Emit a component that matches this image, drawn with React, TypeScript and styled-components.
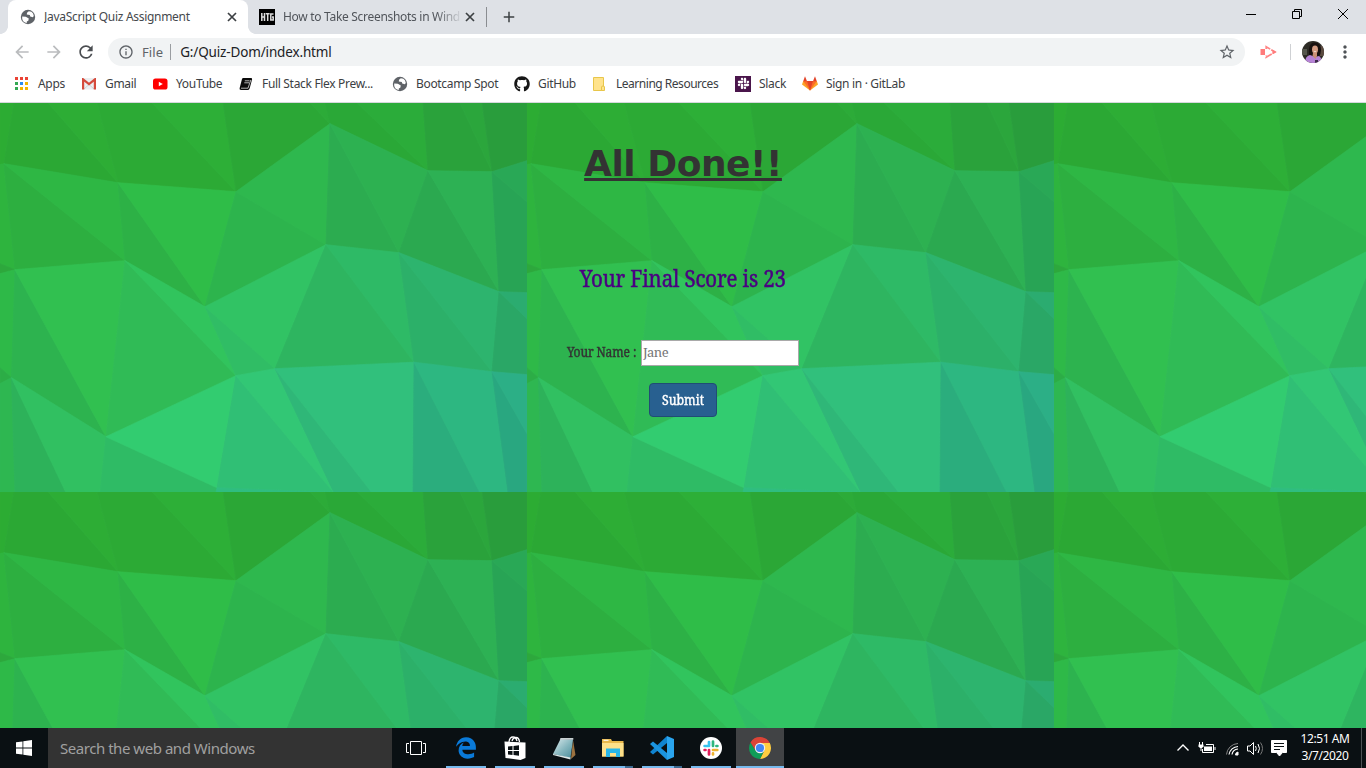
import React from 'react';
import styled, { createGlobalStyle } from 'styled-components';
import {
  MdArrowBack, MdArrowForward, MdRefresh, MdInfoOutline, MdStarBorder, MdMoreVert, MdAdd,
} from 'react-icons/md';
import { FaGithub, FaSlack, FaEdgeLegacy } from 'react-icons/fa';

const Global = createGlobalStyle`
  * { box-sizing: border-box; }
  html, body { margin: 0; padding: 0; overflow: hidden; }
  svg { display: block; flex: none; }
`;

const ui = `"Noto Sans", "Open Sans", sans-serif`;

const Screen = styled.div`
  width: 1366px;
  height: 768px;
  display: flex;
  flex-direction: column;
  overflow: hidden;
  background: #fff;
  font-family: ${ui};
  font-size: 12px;
  color: #3c4043;
`;

/* ---------- browser chrome ---------- */
const TabStrip = styled.div`
  height: 34px;
  background: #dee1e6;
  display: flex;
  align-items: stretch;
`;
const TabCorner = styled.div<{ $side: 'left' | 'right' }>`
  width: 8px;
  background: radial-gradient(circle at ${p => (p.$side === 'left' ? '0 26px' : '8px 26px')}, #dee1e6 7.6px, #fff 8.2px);
  clip-path: inset(26px 0 0 0);
`;
const Tab = styled.div<{ $active?: boolean }>`
  width: ${p => (p.$active ? 240 : 230)}px;
  padding: 0 9px 0 ${p => (p.$active ? 12 : 3)}px;
  background: ${p => (p.$active ? '#fff' : 'transparent')};
  border-radius: 8px 8px 0 0;
  display: flex;
  align-items: center;
`;
const TabTitle = styled.span<{ $fade?: boolean; $ls: number }>`
  flex: 1;
  margin-left: 8px;
  overflow: hidden;
  white-space: nowrap;
  font-size: 12px;
  line-height: 18px;
  padding-bottom: 1px;
  letter-spacing: ${p => p.$ls}px;
  color: ${p => (p.$fade ? '#50545a' : '#45494d')};
  ${p => p.$fade && 'mask-image: linear-gradient(90deg, #000 85%, transparent 100%);'}
`;
const HtgBadge = styled.div`
  width: 16px;
  height: 16px;
  background: #000;
  display: flex;
  align-items: center;
  justify-content: center;
`;
const Divider = styled.div<{ $h: number; $color: string; $mx?: string }>`
  width: 1px;
  height: ${p => p.$h}px;
  margin: ${p => p.$mx ?? '0'};
  background: ${p => p.$color};
`;
const NewTab = styled.div`
  display: flex;
  align-items: center;
  gap: 13px;
`;
const WindowControls = styled.div`
  margin-left: auto;
  display: flex;
  gap: 36px;
  padding: 9px 18px 0 0;
`;
const Toolbar = styled.div`
  height: 36px;
  display: flex;
  align-items: center;
  padding: 0 11px 0 12px;
`;
const NavButtons = styled.div`
  display: flex;
  gap: 12px;
  color: #babcbe;
  margin-right: 12px;
`;
const Omnibox = styled.div`
  width: 1137px;
  height: 28px;
  border-radius: 14px;
  background: #f1f3f4;
  display: flex;
  align-items: center;
  padding: 0 9px 0 10px;
  color: #5f6368;
`;
const Scheme = styled.span`
  margin: 0 7px 0 8px;
  font-size: 13px;
  letter-spacing: 0.1px;
`;
const Address = styled.span`
  flex: 1;
  margin-left: 9px;
  color: #202124;
  font-size: 13.5px;
  letter-spacing: -0.15px;
`;
const ToolbarEnd = styled.div`
  flex: 1;
  display: flex;
  align-items: center;
  justify-content: flex-end;
`;
const Bookmarks = styled.div`
  height: 33px;
  display: flex;
  align-items: center;
  padding: 0 0 5px 15px;
  border-bottom: 1px solid #d5d8dc;
`;
const Bookmark = styled.div<{ $w: number; $gap: number; $ls?: number }>`
  width: ${p => p.$w}px;
  display: flex;
  align-items: center;
  gap: ${p => p.$gap}px;
  white-space: nowrap;
  letter-spacing: ${p => p.$ls ?? -0.32}px;
`;

/* ---------- page ---------- */
const Page = styled.main`
  position: relative;
  flex: 1;
  overflow: hidden;
`;
const Backdrop = styled.svg`
  position: absolute;
  inset: 0;
  width: 100%;
  height: 100%;
`;
const Quiz = styled.div`
  position: relative;
  display: flex;
  flex-direction: column;
  align-items: center;
  padding-top: 40px;
  font-family: "Noto Serif", "DejaVu Serif Condensed", serif;
`;
const Title = styled.h1`
  margin: 0;
  font: bold 36px/42px "DejaVu Sans", sans-serif;
  letter-spacing: -0.48px;
  color: #333;
  text-decoration: underline;
  text-decoration-thickness: 3px;
  text-underline-offset: 2px;
`;
const Score = styled.h3`
  margin: 80px 0 0;
  font-size: 23px;
  line-height: 26px;
  font-weight: 400;
  letter-spacing: -0.15px;
  color: #4b0082;
  -webkit-text-stroke: 0.5px #4b0082;
  transform: scaleX(0.89);
`;
const NameRow = styled.label`
  margin-top: 49px;
  display: flex;
  align-items: center;
  gap: 4px;
  font-size: 13px;
  color: #333;
`;
const LabelText = styled.span`
  width: 70px;
  padding-bottom: 2px;
  font-size: 13.5px;
  letter-spacing: -0.15px;
  white-space: nowrap;
  -webkit-text-stroke: 0.4px #333;
  transform: scaleX(0.895);
  transform-origin: left;
`;
const NameInput = styled.input`
  width: 158px;
  height: 26px;
  padding: 0 1px 2px;
  border: 1px solid #a9a9a9;
  background: #fff;
  font: inherit;
  letter-spacing: -0.55px;
  outline: none;
  &::placeholder { color: #757575; opacity: 1; }
`;
const Submit = styled.button`
  margin-top: 17px;
  width: 68px;
  height: 34px;
  padding: 0 0 1px;
  border: 1px solid #204d74;
  border-radius: 4px;
  background: #286090;
  color: #fff;
  font: inherit;
  font-size: 14px;
  -webkit-text-stroke: 0.4px #fff;
`;
const SubmitText = styled.span`
  display: block;
  transform: scaleX(0.88);
`;

/* ---------- taskbar ---------- */
const Taskbar = styled.footer`
  height: 40px;
  background: #0a1013;
  display: flex;
  align-items: stretch;
  color: #fff;
`;
const Cell = styled.div<{ $w: number }>`
  width: ${p => p.$w}px;
  display: flex;
  align-items: center;
  justify-content: center;
`;
const Search = styled.div`
  width: 344px;
  background: #333;
  color: #a0a0a0;
  font-size: 15px;
  letter-spacing: -0.46px;
  line-height: 41px;
  padding-left: 12px;
`;
const Apps = styled.div`
  display: flex;
  gap: 9px;
  padding-left: 6px;
`;
const AppButton = styled.div<{ $active?: boolean; $stacked?: boolean }>`
  width: ${p => (p.$active ? 48 : 40)}px;
  margin-left: ${p => (p.$active ? -4 : 0)}px;
  background: ${p => (p.$active ? '#414345' : 'transparent')};
  border-bottom: 2px solid #76b9ed;
  ${p => p.$stacked && 'border-image: linear-gradient(90deg, #76b9ed 31px, #3d6a90 31px) 2;'}
  padding-top: 2px;
  display: flex;
  align-items: center;
  justify-content: center;
`;
const Tray = styled.div`
  margin-left: auto;
  display: flex;
  align-items: center;
`;
const Clock = styled.div`
  width: 62px;
  margin-left: 6px;
  padding-bottom: 2px;
  text-align: center;
  font-size: 12px;
  line-height: 17px;
  letter-spacing: -0.42px;
  white-space: nowrap;
`;
const ShowDesktop = styled.div`
  width: 5px;
  height: 40px;
  margin-left: 5px;
  border-left: 1px solid #4c5154;
`;

/* Low-poly tile, 527 x 389, repeated over the page. */
const facets: [string, string][] = [
  // top band
  ['0,-1 14,-1 4,60 0,61', '#2cac33'],
  ['14,-1 48,-1 118,79 4,60', '#2ba834'],
  ['48,-1 97,-1 118,79', '#2dad35'],
  ['97,-1 152,-1 236,88 118,79', '#2caa35'],
  ['152,-1 223,-1 236,88', '#2daf37'],
  ['223,-1 310,-1 330,20 236,88', '#2ba736'],
  ['310,-1 325,-1 330,20', '#2cab38'],
  ['325,-1 357,-1 428,67 330,20', '#2aa837'],
  ['357,-1 423,-1 428,67', '#2bac3a'],
  ['423,-1 460,-1 492,68 428,67', '#2aa23b'],
  ['460,-1 482,-1 492,68', '#2ba63c'],
  ['482,-1 527,-1 527,57 492,68', '#299d3c'],
  // second band
  ['0,61 4,60 15,166 0,160', '#2eb43e'],
  ['4,60 125,157 15,166', '#2daf40'],
  ['4,60 118,79 125,157', '#2eb744'],
  ['118,79 205,203 125,157', '#2db146'],
  ['118,79 236,88 205,203', '#2fbd48'],
  ['236,88 326,141 205,203', '#2db44d'],
  ['236,88 330,20 326,141', '#2eb84e'],
  ['330,20 399,149 326,141', '#2cac50'],
  ['330,20 428,67 399,149', '#2db151'],
  ['428,67 499,188 399,149', '#2ba950'],
  ['428,67 492,68 499,188', '#2db154'],
  ['492,68 527,98 527,189 499,188', '#28a455'],
  ['492,68 527,57 527,98', '#29a856'],
  ['0,160 15,166 0,170', '#2da83c'],
  // third band
  ['0,170 15,166 11.5,274 0,264', '#2eb948'],
  ['15,166 106,333 11.5,274', '#2db34f'],
  ['15,166 125,157 106,333', '#31c050'],
  ['125,157 236,272 106,333', '#30bb56'],
  ['125,157 205,203 236,272', '#31c45d'],
  ['205,203 275,265 236,272', '#30bd65'],
  ['205,203 326,141 275,265', '#31c364'],
  ['326,141 414,258.5 275,265', '#2eb560'],
  ['326,141 399,149 414,258.5', '#2eba66'],
  ['399,149 492,268 414,258.5', '#2cb069'],
  ['399,149 499,188 492,268', '#2db46e'],
  ['499,188 527,215 527,271 492,268', '#2aa766'],
  ['499,188 527,189 527,215', '#2bac70'],
  ['0,264 11.5,274 0,280', '#2cad46'],
  // bottom band
  ['0,280 11.5,274 15,389 0,389', '#2eb751'],
  ['11.5,274 66,389 15,389', '#2db25a'],
  ['11.5,274 106,333 100,389 66,389', '#31c061'],
  ['106,333 217,384 216,389 100,389', '#2fbb65'],
  ['106,333 236,272 217,384', '#32cc70'],
  ['236,272 334,389 217,384', '#30bf75'],
  ['236,272 275,265 334,389', '#32c775'],
  ['275,265 372,389 334,389', '#2fb778'],
  ['275,265 414,258.5 413,389 372,389', '#31c07c'],
  ['414,258.5 480,389 413,389', '#2bad7d'],
  ['414,258.5 492,268 508,389 480,389', '#2db781'],
  ['492,268 527,330 527,389 508,389', '#29a780'],
  ['492,268 527,271 527,330', '#2caf86'],
  ['217,384 334,389 216,389', '#2fbd80'],
];

const LowPoly = () => (
  <Backdrop aria-hidden>
    <defs>
      <pattern id="poly" width="527" height="389" patternUnits="userSpaceOnUse">
        <rect width="527" height="389" fill="#2eb75a" />
        <g transform="translate(0 .7)">
          {facets.map(([points, fill]) => (
            <polygon key={points} points={points} fill={fill} stroke={fill} strokeWidth="0.7" />
          ))}
        </g>
      </pattern>
    </defs>
    <rect width="100%" height="100%" fill="url(#poly)" />
  </Backdrop>
);

const Globe = () => (
  <svg width="16" height="16" viewBox="0 0 16 16">
    <circle cx="8" cy="8" r="7.200" fill="#5f6368" />
    <path d="M8.800 2.200 7 3.800 6.800 5.500l3 .6.400 1.500 2.600.6 1-1.200q-.2-2.800-2.400-4.200z" fill="#fff" />
    <path d="M2.200 7.600l3.600.2 3 1.800-.5 2.200-1.500.8v1.500Q3 13.500 2.200 9.800z" fill="#fff" />
  </svg>
);
const CloseMark = () => (
  <svg width="14" height="14" viewBox="0 0 14 14">
    <path d="M3 3l8 8M11 3l-8 8" stroke="#3c4043" strokeWidth="1.700" />
  </svg>
);
const AppsGrid = () => {
  const colors = ['#ea4335', '#ea4335', '#ea4335', '#34a853', '#2a8bf2', '#f4b400', '#34a853', '#f4b400', '#f4b400'];
  return (
    <svg width="13" height="13" viewBox="0 0 13 13">
      {colors.map((c, i) => (
        <rect key={i} x={(i % 3) * 5} y={Math.floor(i / 3) * 5} width="3" height="3" fill={c} />
      ))}
    </svg>
  );
};
const Gmail = () => (
  <svg width="14" height="12" viewBox="0 0 14 12">
    <rect width="14" height="11.500" rx="1" fill="#eceff1" />
    <path d="M2 11 7 6.500 12 11" fill="none" stroke="#d0d3d6" />
    <path d="M1.100 11.500V1.400L7 6.200l5.900-4.800v10.100" fill="none" stroke="#d54b3d" strokeWidth="2.200" />
  </svg>
);
const YouTube = () => (
  <svg width="15" height="12" viewBox="0 0 15 12">
    <rect y=".5" width="14.500" height="11" rx="2.600" fill="#f00" />
    <path d="M5.800 3.700v4.600L9.800 6z" fill="#fff" />
  </svg>
);
const Book = () => (
  <svg width="14" height="14" viewBox="0 0 14 14">
    <path d="M4.300 1h7.600q1.500 0 1.200 1.200l-2.400 9Q10.300 13 9 13H2Q.2 13 .6 11.200L3 2q.3-1 1.300-1z" fill="#0b0b0b" />
    <path d="M5.800 3.800h4.700M5.300 5.800H10M2 11.200h7L11.800 3" fill="none" stroke="#fff" strokeWidth=".7" />
  </svg>
);
const Folder = () => (
  <svg width="14" height="16" viewBox="0 0 14 16">
    <path d="M1.500 1.500h10v13h-10z" fill="#ffe38c" stroke="#e8c64a" />
    <path d="M9.500 14.500v-3.500q0-1 1.500-1t1.500 1v3.500z" fill="#ffe38c" stroke="#e8c64a" />
  </svg>
);
const SlackTile = styled.div`
  width: 16px;
  height: 16px;
  background: #4a154b;
  color: #fff;
  display: flex;
  align-items: center;
  justify-content: center;
`;
const GitLab = () => (
  <svg width="16" height="15" viewBox="0 0 16 15">
    <path d="M8 14.500 0 8.500 1.200 5h13.600L16 8.500z" fill="#fca326" />
    <path d="M8 14.500 1.200 5h13.600z" fill="#fc6d26" />
    <path d="M8 14.500 5 5h6z" fill="#e24329" />
    <path d="M1.200 5.300 3 .3l2 5zM14.800 5.300 13 .3l-2 5z" fill="#e24329" />
  </svg>
);
const Recorder = () => (
  <svg width="17" height="14" viewBox="0 0 17 14">
    <path d="M.5 4H5v6H.5z" fill="#ff7b7b" />
    <path d="M6.200 4V1.700L15 7l-8.800 5.300V10" fill="none" stroke="#ff8585" strokeWidth="1.700" strokeDasharray="7 1.200" />
    <path d="M12.500 4.700 16.500 7l-4 2.300z" fill="#ff7b7b" />
  </svg>
);
const Avatar = () => (
  <svg width="22" height="22" viewBox="0 0 22 22">
    <defs><clipPath id="face"><circle cx="11" cy="11" r="11" /></clipPath></defs>
    <g clipPath="url(#face)">
      <rect width="22" height="22" fill="#2d2b25" />
      <path d="M0 8h5v6H0z" fill="#55564c" /><path d="M18 5h4v10h-4z" fill="#5b4a40" />
      <path d="M7 14Q6 1.500 12.500 1.500T19 9q0 4-2 6z" fill="#17100f" />
      <path d="M3 22q0-7 5-8l5 2 4-1q3 2 3 7z" fill="#b683d6" />
      <path d="M11 12h4v3l-1.500 3-3-3z" fill="#c98e74" />
      <ellipse cx="13" cy="8.500" rx="3" ry="4" fill="#d39b81" />
      <path d="M11.500 10.200q1.500 1.500 3 0z" fill="#fff" />
      <path d="M13 19h3v3h-3z" fill="#402c4c" />
    </g>
  </svg>
);

const Windows = ({ size }: { size: number }) => (
  <svg width={size} height={size} viewBox="0 0 16 16" fill="#fff">
    <path d="M0 2.300 6.500 1.400V7.500H0zM7.300 1.300 16 0v7.500H7.300zM0 8.400h6.500v6.200L0 13.700zM7.300 8.400H16V16l-8.700-1.300z" />
  </svg>
);
const Store = () => (
  <svg width="22" height="24" viewBox="0 0 22 24">
    <path d="M5 6Q5.500 1 9 1q3 0 4 4M8 5q1-3.500 4-3.500T15.500 6" fill="none" stroke="#fff" strokeWidth="1.300" />
    <path d="M.5 5.500 21.500 6.500V22l-5 2L1.500 22z" fill="#fff" />
    <path d="M4 10.500l4.500-.5v4H4zM9.500 9.900 15 9.300V14H9.500zM4 15h4.500v4L4 18.500zM9.500 15H15v4.700l-5.500-.6z" fill="#0a1013" />
  </svg>
);
const Notepad = () => (
  <svg width="23" height="23" viewBox="0 0 23 23">
    <defs>
      <linearGradient id="pad" x1="0" y1="0" x2="1" y2="1"><stop offset="0" stopColor="#dcebed" /><stop offset=".55" stopColor="#83b5bd" /><stop offset="1" stopColor="#4a8d9b" /></linearGradient>
    </defs>
    <path d="M20 3l2.500 15-4.500 4z" fill="#9b7240" />
    <path d="M0 17 7.500 2 20 2.500 17.500 21z" fill="url(#pad)" />
    <path d="M0 17l17.500 3.500v2L0 18z" fill="#dce8e8" />
    <path d="M7.500 1h12.800v1.800H6.800z" fill="#c9d1d2" />
  </svg>
);
const Explorer = () => (
  <svg width="22" height="19" viewBox="0 0 22 19">
    <path d="M0 0h9l1 2h11.500v15.500H0z" fill="#e8b84c" />
    <path d="M0 4h21.500v13.500H0z" fill="#fde08a" />
    <path d="M1.500 1.300h5" stroke="#fff" />
    <path d="M4 9.500h14V18h-4v-4H8v4H4z" fill="#29b6e8" />
  </svg>
);
const VsCode = () => (
  <svg width="24" height="24" viewBox="0 0 24 24">
    <path d="M17 0 24 3v18l-7 3z" fill="#2aa5ee" />
    <path d="M17 0v7L3 18.500 0 16z" fill="#1084d0" />
    <path d="M17 24v-7L3 5.500 0 8z" fill="#1b94df" />
  </svg>
);
const SlackColor = () => (
  <svg width="22" height="22" viewBox="0 0 22 22" strokeWidth="2.700" strokeLinecap="round">
    <circle cx="11" cy="11" r="11" fill="#fff" />
    <path d="M9 5v4M4.600 9H7" stroke="#36c5f0" />
    <path d="M13 4.600V9M17.400 9h-1" stroke="#2eb67d" />
    <path d="M13 13h4.300M13 17.400v-1" stroke="#ecb22e" />
    <path d="M9 13v4.400M4.600 13H5.500" stroke="#e01e5a" />
  </svg>
);
const Chrome = () => (
  <svg width="22" height="22" viewBox="0 0 22 22">
    <path d="M11 6h9.800A11 11 0 0 1 11 22l4.300-8.500z" fill="#ffcd40" />
    <path d="M6.700 13.500 1.500 5.500A11 11 0 0 0 11 22l4.300-8.500z" fill="#0f9d58" />
    <path d="M6.700 13.500 1.500 5.500A11 11 0 0 1 20.800 6H11z" fill="#db4437" />
    <circle cx="11" cy="11" r="5.200" fill="#f1f1f1" /><circle cx="11" cy="11" r="4.100" fill="#4285f4" />
  </svg>
);
const TrayIcons = () => (
  <svg width="112" height="20" viewBox="0 0 112 20" fill="none" stroke="#fff">
    <path d="M1.500 12.500 7 7l5.500 5.500" strokeWidth="1.400" />
    <path d="M30 6.500h7.500v8H26.500V11" /><rect x="28" y="8.500" width="8" height="4.500" fill="#fff" stroke="none" />
    <path d="M39 9v3M23.500 4v3M26.500 4v3" /><path d="M22.500 6.500h5v2l-1.500 1.500h-2l-1.500-1.500z" fill="#fff" stroke="none" /><path d="M25 9v4" />
    <path d="M50.500 16.500A12 12 0 0 1 62 5.500" stroke="#888" />
    <path d="M53 16.500a9.500 9.500 0 0 1 9-8M56 16.500a6.500 6.500 0 0 1 6-5.500" strokeWidth="1.200" />
    <path d="M59.500 17a3 3 0 0 1 2.500-3v3z" fill="#fff" />
    <path d="M71.500 8h2.500l3.500-3.500v12L74 13h-2.500z" />
    <path d="M79.500 8q1.500 2.500 0 5M82 6q3 4.500 0 9" /><path d="M84.500 4.500q4 6 0 12" stroke="#777" />
    <path d="M95.500 2.500h15v12h-4l-3 3.500-3-3.500h-5z" fill="#fff" />
    <path d="M98 5.500h10M98 8.500h10M98 11.500h6" stroke="#0a1013" />
  </svg>
);

export default function App() {
  return (
    <Screen>
      <Global />
      <TabStrip>
        <TabCorner $side="left" />
        <Tab $active>
          <Globe />
          <TabTitle $ls={-0.3}>JavaScript Quiz Assignment</TabTitle>
          <CloseMark />
        </Tab>
        <TabCorner $side="right" />
        <Tab>
          <HtgBadge>
            <svg width="13" height="8" viewBox="0 0 13 8" fill="none" stroke="#ddd" strokeWidth="1.500">
              <path d="M.8 0v8M3.500 0v8M.8 4h2.700M4.800.8h3.800M6.700 1v7M12.500 1H9.800v6h2.400V4H11" />
            </svg>
          </HtgBadge>
          <TabTitle $fade $ls={-0.3}>How to Take Screenshots in Wind</TabTitle>
          <CloseMark />
        </Tab>
        <NewTab>
          <Divider $h={20} $color="#8a8d91" />
          <MdAdd size={18} />
        </NewTab>
        <WindowControls>
          <svg width="10" height="10" viewBox="0 0 10 10"><path d="M0 5.500h10" stroke="#000" /></svg>
          <svg width="10" height="10" viewBox="0 0 10 10" fill="none" stroke="#000">
            <path d="M.5 2.500h7v7h-7zM2.500 2.500v-2h7v7h-2" />
          </svg>
          <svg width="10" height="10" viewBox="0 0 10 10"><path d="M0 0l10 10M10 0 0 10" stroke="#000" /></svg>
        </WindowControls>
      </TabStrip>
      <Toolbar>
        <NavButtons>
          <MdArrowBack size={20} />
          <MdArrowForward size={20} />
          <MdRefresh size={20} color="#4a4d51" />
        </NavButtons>
        <Omnibox>
          <MdInfoOutline size={16} />
          <Scheme>File</Scheme>
          <Divider $h={16} $color="#9a9da1" />
          <Address>G:/Quiz-Dom/index.html</Address>
          <MdStarBorder size={18} />
        </Omnibox>
        <ToolbarEnd>
          <Recorder />
          <Divider $h={16} $color="#cfd1d4" $mx="0 11px 0 13px" />
          <Avatar />
          <Divider $h={0} $color="transparent" $mx="0 5px" />
          <MdMoreVert size={20} color="#4f5357" />
        </ToolbarEnd>
      </Toolbar>
      <Bookmarks>
        <Bookmark $w={67} $gap={10}><AppsGrid />Apps</Bookmark>
        <Bookmark $w={71} $gap={9}><Gmail />Gmail</Bookmark>
        <Bookmark $w={86} $gap={8}><YouTube />YouTube</Bookmark>
        <Bookmark $w={153} $gap={9}><Book />Full Stack Flex Prew...</Bookmark>
        <Bookmark $w={122} $gap={8}><Globe />Bootcamp Spot</Bookmark>
        <Bookmark $w={78} $gap={8}><FaGithub size={16} color="#161616" />GitHub</Bookmark>
        <Bookmark $w={143} $gap={10} $ls={-0.48}><Folder />Learning Resources</Bookmark>
        <Bookmark $w={67} $gap={8}><SlackTile><FaSlack size={13} /></SlackTile>Slack</Bookmark>
        <Bookmark $w={120} $gap={8}><GitLab />Sign in · GitLab</Bookmark>
      </Bookmarks>
      <Page>
        <LowPoly />
        <Quiz>
          <Title>All Done!!</Title>
          <Score>Your Final Score is 23</Score>
          <NameRow>
            <LabelText>Your Name :</LabelText>
            <NameInput placeholder="Jane" />
          </NameRow>
          <Submit><SubmitText>Submit</SubmitText></Submit>
        </Quiz>
      </Page>
      <Taskbar>
        <Cell $w={48}><Windows size={16} /></Cell>
        <Search>Search the web and Windows</Search>
        <Cell $w={48}>
          <svg width="20" height="14" viewBox="0 0 20 14" fill="none" stroke="#fff">
            <path d="M4.500.500h11v13h-11zM3 2.500H.500v9H3M17 2.500h2.500v9H17" />
          </svg>
        </Cell>
        <Apps>
          <AppButton><FaEdgeLegacy size={22} color="#0a7ad8" /></AppButton>
          <AppButton><Store /></AppButton>
          <AppButton><Notepad /></AppButton>
          <AppButton $stacked><Explorer /></AppButton>
          <AppButton $stacked><VsCode /></AppButton>
          <AppButton><SlackColor /></AppButton>
          <AppButton $active><Chrome /></AppButton>
        </Apps>
        <Tray>
          <TrayIcons />
          <Clock>12:51 AM<br />3/7/2020</Clock>
          <ShowDesktop />
        </Tray>
      </Taskbar>
    </Screen>
  );
}
